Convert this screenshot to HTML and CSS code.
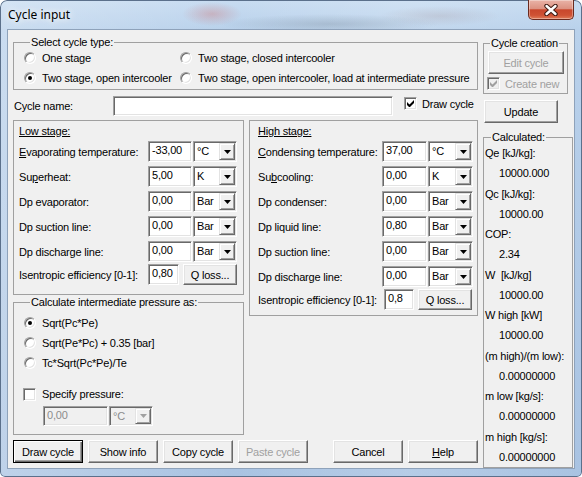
FILE: index.html
```html
<!DOCTYPE html>
<html>
<head>
<meta charset="utf-8">
<title>Cycle input</title>
<link rel="stylesheet" href="styles.css">
</head>
<body>
<div class="window">
  <div class="titlebar">
    <span class="title">Cycle input</span>
    <div class="close">
      <svg width="16" height="12" viewBox="0 0 16 12"><path d="M3.5 2 L12.5 10 M12.5 2 L3.5 10" stroke="#3d1a12" stroke-width="4.4" stroke-linecap="round"/><path d="M3.5 2 L12.5 10 M12.5 2 L3.5 10" stroke="#fff" stroke-width="2.4" stroke-linecap="round"/></svg>
    </div>
  </div>
  <div class="client">
    <div class="left">
      <fieldset class="group cycle-type">
        <legend>Select cycle type:</legend>
        <div class="type-grid">
          <div class="opt"><span class="radio"></span>One stage</div>
          <div class="opt"><span class="radio"></span>Two stage, closed intercooler</div>
          <div class="opt"><span class="radio on"></span>Two stage, open intercooler</div>
          <div class="opt"><span class="radio"></span>Two stage, open intercooler, load at intermediate pressure</div>
        </div>
      </fieldset>

      <div class="name-row">
        <span class="name-lbl">Cycle name:</span>
        <span class="edit name-input"></span>
        <span class="chk-line draw-check"><span class="check"><svg width="7" height="7" viewBox="0 0 7 7"><polygon points="0,2 2.5,4.5 7,0 7,3 2.5,7.5 0,5" fill="#000"/></svg></span>Draw cycle</span>
      </div>

      <div class="stages">
        <div class="low-col">
          <div class="panel low">
            <div class="ptitle"><u>Low stage:</u></div>
            <div class="row"><span class="lab"><u>E</u>vaporating temperature:</span><span class="edit val">-33,00</span><span class="combo"><span class="ctext">°C</span><span class="arrow"><svg width="7" height="4" viewBox="0 0 7 4"><polygon points="0,0 7,0 3.5,4" fill="#000"/></svg></span></span></div>
            <div class="row"><span class="lab">Su<u>p</u>erheat:</span><span class="edit val">5,00</span><span class="combo"><span class="ctext">K</span><span class="arrow"><svg width="7" height="4" viewBox="0 0 7 4"><polygon points="0,0 7,0 3.5,4" fill="#000"/></svg></span></span></div>
            <div class="row"><span class="lab">Dp evaporator:</span><span class="edit val">0,00</span><span class="combo"><span class="ctext">Bar</span><span class="arrow"><svg width="7" height="4" viewBox="0 0 7 4"><polygon points="0,0 7,0 3.5,4" fill="#000"/></svg></span></span></div>
            <div class="row"><span class="lab">Dp suction line:</span><span class="edit val">0,00</span><span class="combo"><span class="ctext">Bar</span><span class="arrow"><svg width="7" height="4" viewBox="0 0 7 4"><polygon points="0,0 7,0 3.5,4" fill="#000"/></svg></span></span></div>
            <div class="row"><span class="lab">Dp discharge line:</span><span class="edit val">0,00</span><span class="combo"><span class="ctext">Bar</span><span class="arrow"><svg width="7" height="4" viewBox="0 0 7 4"><polygon points="0,0 7,0 3.5,4" fill="#000"/></svg></span></span></div>
            <div class="row last"><span class="lab">Isentropic efficiency [0-1]:</span><span class="edit eff">0,80</span><span class="btn qloss">Q loss...</span></div>
          </div>

          <fieldset class="group inter">
            <legend>Calculate intermediate pressure as:</legend>
            <div class="irow"><span class="radio on"></span>Sqrt(Pc*Pe)</div>
            <div class="irow"><span class="radio"></span>Sqrt(Pe*Pc) + 0.35 [bar]</div>
            <div class="irow"><span class="radio"></span>Tc*Sqrt(Pc*Pe)/Te</div>
            <div class="irow spec"><span class="check"></span>Specify pressure:</div>
            <div class="dis-row"><span class="edit dis-edit">0,00</span><span class="combo dis-combo"><span class="ctext">°C</span><span class="arrow"><svg width="7" height="4" viewBox="0 0 7 4"><polygon points="0,0 7,0 3.5,4" fill="#a0a0a0"/></svg></span></span></div>
          </fieldset>
        </div>

        <div class="panel high">
          <div class="ptitle"><u>High stage:</u></div>
          <div class="row"><span class="lab"><u>C</u>ondensing temperature:</span><span class="edit val">37,00</span><span class="combo"><span class="ctext">°C</span><span class="arrow"><svg width="7" height="4" viewBox="0 0 7 4"><polygon points="0,0 7,0 3.5,4" fill="#000"/></svg></span></span></div>
          <div class="row"><span class="lab">Su<u>b</u>cooling:</span><span class="edit val">0,00</span><span class="combo"><span class="ctext">K</span><span class="arrow"><svg width="7" height="4" viewBox="0 0 7 4"><polygon points="0,0 7,0 3.5,4" fill="#000"/></svg></span></span></div>
          <div class="row"><span class="lab">Dp condenser:</span><span class="edit val">0,00</span><span class="combo"><span class="ctext">Bar</span><span class="arrow"><svg width="7" height="4" viewBox="0 0 7 4"><polygon points="0,0 7,0 3.5,4" fill="#000"/></svg></span></span></div>
          <div class="row"><span class="lab">Dp liquid line:</span><span class="edit val">0,80</span><span class="combo"><span class="ctext">Bar</span><span class="arrow"><svg width="7" height="4" viewBox="0 0 7 4"><polygon points="0,0 7,0 3.5,4" fill="#000"/></svg></span></span></div>
          <div class="row"><span class="lab">Dp suction line:</span><span class="edit val">0,00</span><span class="combo"><span class="ctext">Bar</span><span class="arrow"><svg width="7" height="4" viewBox="0 0 7 4"><polygon points="0,0 7,0 3.5,4" fill="#000"/></svg></span></span></div>
          <div class="row"><span class="lab">Dp discharge line:</span><span class="edit val">0,00</span><span class="combo"><span class="ctext">Bar</span><span class="arrow"><svg width="7" height="4" viewBox="0 0 7 4"><polygon points="0,0 7,0 3.5,4" fill="#000"/></svg></span></span></div>
          <div class="row last"><span class="lab lab-eff">Isentropic efficiency [0-1]:</span><span class="edit eff">0,8</span><span class="btn qloss">Q loss...</span></div>
        </div>
      </div>

      <div class="buttons">
        <span class="btn default">Draw cycle</span>
        <span class="btn">Show info</span>
        <span class="btn">Copy cycle</span>
        <span class="btn disabled">Paste cycle</span>
        <span class="btn cancel">Cancel</span>
        <span class="btn"><u>H</u>elp</span>
      </div>
    </div>

    <div class="right">
      <fieldset class="group creation">
        <legend>Cycle creation</legend>
        <span class="btn disabled edit-cycle">Edit cycle</span>
        <span class="chk-line create-new"><span class="check dis"><svg width="7" height="7" viewBox="0 0 7 7"><polygon points="0,2 2.5,4.5 7,0 7,3 2.5,7.5 0,5" fill="#a0a0a0"/></svg></span>Create new</span>
      </fieldset>
      <span class="btn update">Update</span>
      <fieldset class="group calc">
        <legend>Calculated:</legend>
        <div class="lines">
          <div>Qe [kJ/kg]:</div>
          <div class="v">10000.000</div>
          <div>Qc [kJ/kg]:</div>
          <div class="v">10000.00</div>
          <div>COP:</div>
          <div class="v">2.34</div>
          <div>W&nbsp; [kJ/kg]</div>
          <div class="v">10000.00</div>
          <div>W high [kW]</div>
          <div class="v">10000.00</div>
          <div>(m high)/(m low):</div>
          <div class="v">0.00000000</div>
          <div>m low [kg/s]:</div>
          <div class="v">0.00000000</div>
          <div>m high [kg/s]:</div>
          <div class="v">0.00000000</div>
        </div>
      </fieldset>
    </div>
  </div>
</div>
</body>
</html>
```

FILE: styles.css
```css
* { box-sizing: border-box; }
html, body { margin: 0; padding: 0; }
body {
  width: 582px;
  height: 477px;
  overflow: hidden;
  background: #ffffff;
  font-family: "Liberation Sans", Arial, sans-serif;
  font-size: 11px;
  letter-spacing: -0.2px;
  color: #000;
}

/* ---------- window frame ---------- */
.window {
  width: 582px;
  height: 477px;
  display: flex;
  flex-direction: column;
  border-radius: 7px 7px 5px 5px;
  overflow: hidden;
  background:
    radial-gradient(ellipse 30px 12px at 212px 14px, rgba(205, 110, 110, 0.35), transparent),
    radial-gradient(ellipse 110px 10px at 330px 24px, rgba(80, 95, 110, 0.22), transparent),
    radial-gradient(ellipse 60px 10px at 440px 16px, rgba(150, 120, 120, 0.18), transparent),
    linear-gradient(90deg, rgba(255,255,255,0.25) 0, rgba(255,255,255,0) 40%, rgba(255,255,255,0.15) 70%, rgba(255,255,255,0) 100%),
    linear-gradient(180deg, #c8dcf1 0, #b9d1eb 30px, #a9c3e2 100%);
  box-shadow: inset 0 0 0 1px #5b708b;
}
.titlebar {
  flex: none;
  height: 29px;
  display: flex;
  justify-content: space-between;
  align-items: flex-start;
}
.title {
  margin: 7px 0 0 8px;
  font-family: "Noto Sans", "Open Sans", sans-serif;
  font-size: 12px;
  line-height: 16px;
  letter-spacing: 0;
  color: #000;
  text-shadow: 0 0 6px #fff, 0 0 10px rgba(255, 255, 255, 0.9);
}
.close {
  width: 46px;
  height: 20px;
  margin-right: 8px;
  border: 1px solid #6a2a1e;
  border-top: none;
  border-radius: 0 0 5px 5px;
  background: linear-gradient(180deg, #e9b3a7 0, #dc9282 45%, #c9472c 52%, #cf5234 80%, #e07c58 100%);
  box-shadow: inset 0 0 0 1px rgba(255, 255, 255, 0.35);
  display: flex;
  align-items: center;
  justify-content: center;
}

.client {
  flex: none;
  height: 440px;
  margin: 0 7px;
  border: 1px solid #8ea2ba;
  background: #f0f0f0;
  display: flex;
  padding-left: 5px;
}
.left {
  flex: none;
  width: 465px;
  display: flex;
  flex-direction: column;
}
.right {
  flex: none;
  width: 90px;
  margin-left: 5px;
  display: flex;
  flex-direction: column;
}

/* ---------- group boxes ---------- */
.group {
  margin: 0;
  padding: 0;
  border: 1px solid #a0a0a0;
  min-width: 0;
}
.group > legend {
  padding: 0 1px;
  margin-left: 6px;
  height: 13px;
  line-height: 13px;
  white-space: nowrap;
}

.cycle-type {
  margin-top: 6px;
  padding: 0 0 1px 10px;
}
.type-grid {
  display: grid;
  grid-template-columns: 156px auto;
  grid-auto-rows: 20px;
  margin-top: -1px;
}
.opt, .irow {
  display: flex;
  align-items: center;
  white-space: nowrap;
}

/* ---------- classic controls ---------- */
.radio {
  flex: none;
  width: 12px;
  height: 12px;
  margin-right: 6px;
  border-radius: 50%;
  background: #fff;
  border: 1px solid;
  border-color: #a0a0a0 #ffffff #ffffff #a0a0a0;
  box-shadow: inset 1px 1px 0 #696969, inset -1px -1px 0 #e3e3e3;
  position: relative;
}
.radio.on::after {
  content: "";
  position: absolute;
  left: 3px;
  top: 3px;
  width: 4px;
  height: 4px;
  border-radius: 50%;
  background: #000;
}
.check {
  flex: none;
  width: 13px;
  height: 13px;
  margin-right: 6px;
  background: #fff;
  border: 1px solid;
  border-color: #a0a0a0 #ffffff #ffffff #a0a0a0;
  box-shadow: inset 1px 1px 0 #696969, inset -1px -1px 0 #e3e3e3;
  display: flex;
  align-items: center;
  justify-content: center;
}
.check.dis { background: #f0f0f0; }
.chk-line {
  display: flex;
  align-items: center;
  white-space: nowrap;
}

.edit {
  display: block;
  flex: none;
  height: 21px;
  padding: 1px 3px 0;
  line-height: 15px;
  background: #fff;
  border: 1px solid;
  border-color: #a0a0a0 #ffffff #ffffff #a0a0a0;
  box-shadow: inset 1px 1px 0 #696969, inset -1px -1px 0 #e3e3e3;
  white-space: nowrap;
  overflow: hidden;
}
.combo {
  flex: none;
  display: flex;
  height: 21px;
  width: 44px;
  margin-left: 1px;
  padding: 1px;
  background: #fff;
  border: 1px solid;
  border-color: #a0a0a0 #ffffff #ffffff #a0a0a0;
  box-shadow: inset 1px 1px 0 #696969, inset -1px -1px 0 #e3e3e3;
}
.ctext {
  flex: 1;
  padding: 1px 0 0 2px;
  line-height: 15px;
  white-space: nowrap;
  overflow: hidden;
}
.arrow {
  flex: none;
  width: 16px;
  height: 17px;
  background: #f0f0f0;
  border: 1px solid;
  border-color: #e3e3e3 #696969 #696969 #e3e3e3;
  box-shadow: inset 1px 1px 0 #fff, inset -1px -1px 0 #a0a0a0;
  display: flex;
  align-items: center;
  justify-content: center;
}
.btn {
  flex: none;
  width: 70px;
  height: 23px;
  background: #f0f0f0;
  border: 1px solid;
  border-color: #ffffff #696969 #696969 #ffffff;
  box-shadow: inset -1px -1px 0 #a0a0a0, inset 1px 1px 0 #e3e3e3;
  display: flex;
  align-items: center;
  justify-content: center;
  white-space: nowrap;
}
.btn.default {
  border-color: #000;
  box-shadow: inset 1px 1px 0 #fff, inset -1px -1px 0 #696969, inset -2px -2px 0 #a0a0a0;
}
.btn.disabled { color: #a0a0a0; }

/* ---------- name row ---------- */
.name-row {
  display: flex;
  align-items: center;
  height: 20px;
  margin-top: 6px;
}
.name-lbl {
  width: 99px;
  margin-left: 1px;
}
.name-input {
  width: 280px;
  height: 20px;
}
.draw-check {
  align-self: flex-start;
  margin: 1px 0 0 11px;
  height: 13px;
}
.draw-check .check { margin-right: 5px; }

/* ---------- stage panels ---------- */
.stages {
  display: flex;
  align-items: flex-start;
  gap: 5px;
  margin-top: 4px;
}
.low-col {
  width: 231px;
  display: flex;
  flex-direction: column;
}
.panel {
  border: 1px solid #a0a0a0;
  padding-top: 3px;
}
.panel.low {
  padding-left: 5px;
  padding-bottom: 9px;
}
.panel.high {
  width: 229px;
  padding-left: 8px;
  padding-bottom: 5px;
}
.ptitle {
  height: 15px;
  line-height: 15px;
}
.row {
  display: flex;
  align-items: center;
  height: 25px;
  white-space: nowrap;
}
.row.last { height: 21px; }
.lab { flex: none; }
.low .lab { width: 129px; }
.high .lab { width: 124px; }
.high .lab.lab-eff { width: 126px; }
.val { width: 44px; }
.high .val, .high .combo { width: 45px; }
.eff { width: 31px; }
.high .eff { width: 30px; }
.qloss {
  width: 54px;
  height: 21px;
  margin-left: 4px;
}

/* ---------- intermediate pressure ---------- */
.inter {
  margin-top: 1px;
  padding: 4px 0 8px 10px;
}
.irow { height: 20px; }
.spec {
  margin-top: 11px;
  margin-left: -1px;
}
.dis-row {
  display: flex;
  height: 20px;
  margin: 2px 0 0 19px;
}
.dis-edit {
  width: 65px;
  height: 20px;
  background: #f0f0f0;
  color: #8c8c8c;
}
.dis-combo {
  width: 44px;
  height: 20px;
  background: #f0f0f0;
  color: #8c8c8c;
}
.dis-combo .arrow { height: 16px; }

/* ---------- bottom buttons ---------- */
.buttons {
  display: flex;
  gap: 5px;
  margin-top: 5px;
}
.buttons .cancel { margin-left: 20px; }

/* ---------- right column ---------- */
.creation {
  width: 85px;
  margin-top: 7px;
  padding: 0;
}
.edit-cycle {
  width: 76px;
  margin: 1px 0 0 4px;
}
.create-new {
  height: 19px;
  margin-left: 3px;
  color: #a0a0a0;
}
.create-new .check { margin-right: 5px; }
.update {
  width: 74px;
  margin: 6px 0 0 1px;
}
.calc {
  width: 90px;
  flex: 1;
  margin-top: 8px;
  padding-left: 1px;
}
.lines {
  margin-top: -1px;
  line-height: 20.25px;
  white-space: nowrap;
}
.lines .v { padding-left: 14px; }
```
